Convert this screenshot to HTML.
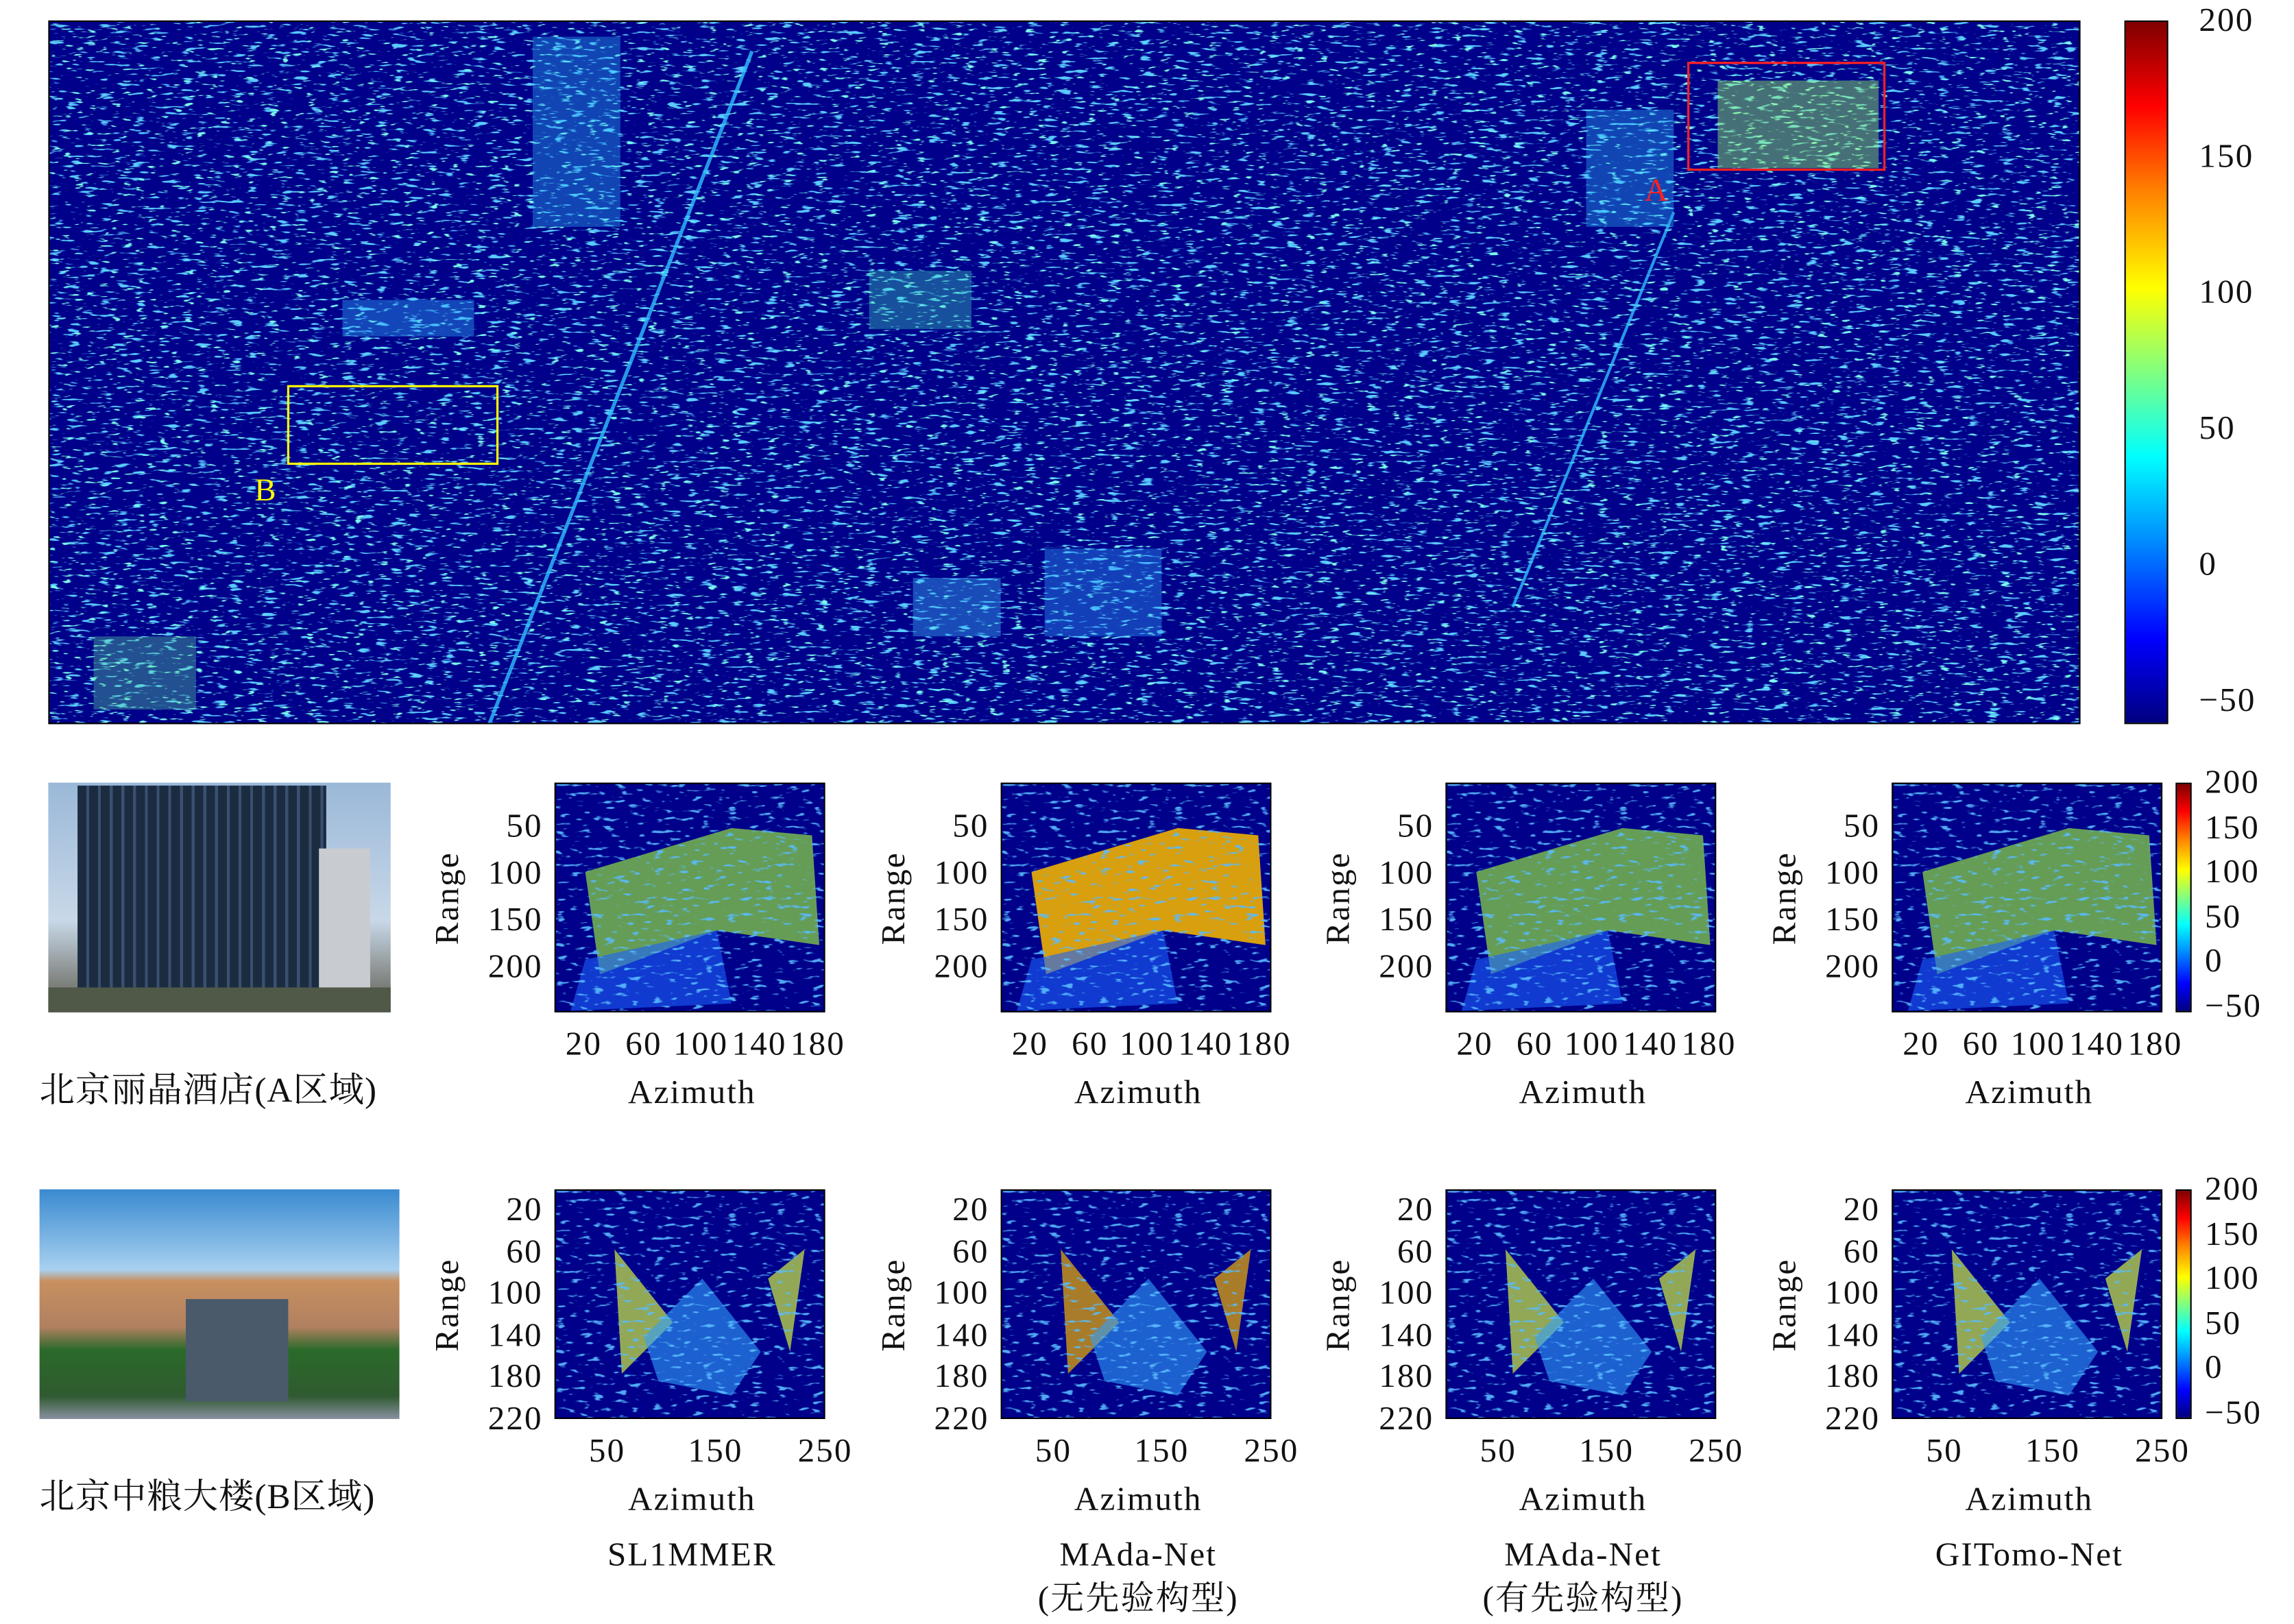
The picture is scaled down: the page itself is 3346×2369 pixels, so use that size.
<!DOCTYPE html>
<html><head><meta charset="utf-8"><style>
html,body{margin:0;padding:0;background:#fff;overflow:hidden}
body{width:3346px;height:2369px;position:relative}
#w{position:absolute;left:0;top:0;width:1568px;height:1110px;transform:scale(2.134);transform-origin:0 0;font-family:"Liberation Serif","Noto Serif CJK SC",serif;color:#111}
.a{position:absolute}
.t{position:absolute;font-size:23px;line-height:22px;white-space:nowrap;letter-spacing:1px}
.r{text-align:right}
.c{text-align:center}
.box{position:absolute;border:1.5px solid #000;box-sizing:border-box;overflow:hidden;background:#00008a}
.cb{background:linear-gradient(to top,#00007f 0%,#0000ff 12%,#00a0ff 28%,#00ffff 38%,#80ff80 50%,#ffff00 62%,#ff8000 76%,#ff0000 88%,#800000 100%);border:1.5px solid #000;box-sizing:border-box}
</style></head><body><div id="w">
<svg width="0" height="0" style="position:absolute">
<defs>
<filter id="n1" x="0" y="0" width="100%" height="100%"><feTurbulence type="fractalNoise" baseFrequency="0.09 0.45" numOctaves="2" seed="3"/><feColorMatrix type="matrix" values="0 0 0 0 0.1  0 0 0 0 0.6  0 0 0 0 1  10 0 0 0 -6.3"/></filter>
<filter id="n2" x="0" y="0" width="100%" height="100%"><feTurbulence type="fractalNoise" baseFrequency="0.12 0.5" numOctaves="2" seed="9"/><feColorMatrix type="matrix" values="0 0 0 0 0.2  0 0 0 0 0.95  0 0 0 0 0.85  10 0 0 0 -6.6"/></filter>
<filter id="n3" x="0" y="0" width="100%" height="100%"><feTurbulence type="fractalNoise" baseFrequency="0.12 0.35" numOctaves="2" seed="5"/><feColorMatrix type="matrix" values="0 0 0 0 0.1  0 0 0 0 0.5  0 0 0 0 1  8 0 0 0 -4.9"/></filter>
</defs></svg>

<div class="box" style="left:33px;top:14px;width:1389px;height:481px">
<svg width="1389" height="481" style="position:absolute;left:0;top:0">
<rect width="1389" height="481" filter="url(#n1)"/>
<rect width="1389" height="481" filter="url(#n2)"/>
<g opacity="0.8">
<rect x="330" y="10" width="60" height="130" fill="#30c0ff" opacity=".45"/>
<rect x="1140" y="40" width="110" height="60" fill="#a0ff60" opacity=".55"/>
<rect x="560" y="170" width="70" height="40" fill="#40e0c0" opacity=".45"/>
<rect x="680" y="360" width="80" height="60" fill="#30a0ff" opacity=".5"/>
<rect x="590" y="380" width="60" height="40" fill="#40c0ff" opacity=".5"/>
<rect x="30" y="420" width="70" height="50" fill="#60e0a0" opacity=".45"/>
<rect x="200" y="190" width="90" height="25" fill="#30b0ff" opacity=".5"/>
<rect x="1050" y="60" width="60" height="80" fill="#30c0ff" opacity=".45"/>
<line x1="300" y1="481" x2="480" y2="20" stroke="#30c0ff" stroke-width="2.5"/>
<line x1="1000" y1="400" x2="1110" y2="130" stroke="#30c0ff" stroke-width="2"/>
</g>
<rect x="163" y="249" width="143" height="53" fill="none" stroke="#ffff00" stroke-width="1.5"/>
<rect x="1120" y="28" width="134" height="73" fill="none" stroke="#ff2020" stroke-width="1.5"/>
<text x="140" y="327" fill="#ffff00" font-size="22" font-family="Liberation Serif">B</text>
<text x="1090" y="122" fill="#ff2020" font-size="22" font-family="Liberation Serif">A</text>
</svg></div>
<div class="a cb" style="left:1452px;top:14px;width:30px;height:481px"></div>
<div class="t" style="left:1503px;top:3px">200</div>
<div class="t" style="left:1503px;top:96px">150</div>
<div class="t" style="left:1503px;top:189px">100</div>
<div class="t" style="left:1503px;top:282px">50</div>
<div class="t" style="left:1503px;top:375px">0</div>
<div class="t" style="left:1503px;top:468px">−50</div>

<div class="a" style="left:33px;top:535px;width:234px;height:157px;background:linear-gradient(#9ab8d8,#c8d8e8 60%,#6a6a60 95%)">
<div class="a" style="left:20px;top:2px;width:170px;height:140px;background:repeating-linear-gradient(90deg,#1c2c40 0 6px,#3a5070 6px 8px)"></div>
<div class="a" style="left:185px;top:45px;width:35px;height:100px;background:#c8ccd0"></div>
<div class="a" style="left:0;top:140px;width:234px;height:17px;background:#505848"></div></div>
<div class="a" style="left:27px;top:813px;width:246px;height:157px;background:linear-gradient(#3a8ad0,#a8d0f0 35%,#c89060 40%,#b08060 60%,#2a6a2a 70%,#305a30 90%,#8890a0)">
<div class="a" style="left:100px;top:75px;width:70px;height:70px;background:#4a5a6a"></div></div>

<div class="t" style="left:27px;top:735px;font-size:24px;letter-spacing:0.5px">北京丽晶酒店(A区域)</div>
<div class="t" style="left:27px;top:1013px;font-size:24px;letter-spacing:0.5px">北京中粮大楼(B区域)</div>

<script>
var X=[379,684,988,1293];
var h='';
for(var r=0;r<2;r++){
 var tp=r?813:535;
 for(var i=0;i<4;i++){
  var x=X[i];
  var blob=r==0?(i==1?'#f0b000':'#90e040'):(i==1?'#f0b000':'#d0f040');
  h+='<div class="box" style="left:'+x+'px;top:'+tp+'px;width:185px;height:157px"><svg width="185" height="157" style="position:absolute">';
  if(r==0){h+='<path d="M20 60 L120 30 L175 35 L180 110 L110 100 L30 130Z" fill="'+blob+'" opacity="'+(i==1?0.9:0.7)+'"/><path d="M20 120 L110 100 L120 150 L10 155Z" fill="#1a60ff" opacity=".6"/>';}
  else{h+='<path d="M40 40 L80 90 L45 125 Z M145 60 L170 40 L160 110Z" fill="'+blob+'" opacity=".7"/><path d="M60 100 L100 60 L140 110 L120 140 L70 130Z" fill="#30a0ff" opacity=".6"/>';}
  h+='<rect width="185" height="157" filter="url(#n3)" opacity=".9"/>';
  h+='</svg></div>';
  var lbl=r==0?['50','100','150','200']:['20','60','100','140','180','220'];
  for(var k=0;k<lbl.length;k++){var y=r==0?554+k*32:816+k*28.5;h+='<div class="t r" style="left:'+(x-66)+'px;top:'+y+'px;width:58px">'+lbl[k]+'</div>';}
  h+='<div class="t c" style="left:'+(x-118)+'px;top:'+(tp+68)+'px;transform:rotate(-90deg);width:90px">Range</div>';
  if(r==0){var xs=['20','60','100','140','180'],xp=[20,61,100,140,180];for(var k=0;k<5;k++)h+='<div class="t c" style="left:'+(x+xp[k]-30)+'px;top:703px;width:60px">'+xs[k]+'</div>';}
  else{var xs=['50','150','250'],xp=[36,110,185];for(var k=0;k<3;k++)h+='<div class="t c" style="left:'+(x+xp[k]-30)+'px;top:981px;width:60px">'+xs[k]+'</div>';}
  h+='<div class="t c" style="left:'+(x-6)+'px;top:'+(tp+201)+'px;width:200px">Azimuth</div>';
 }
 h+='<div class="a cb" style="left:1487px;top:'+tp+'px;width:11px;height:157px"></div>';
 var cl=['200','150','100','50','0','−50'];
 for(var k=0;k<6;k++)h+='<div class="t" style="left:1507px;top:'+(tp-11+k*30.5)+'px">'+cl[k]+'</div>';
}
var nm=[['SL1MMER'],['MAda-Net','(无先验构型)'],['MAda-Net','(有先验构型)'],['GITomo-Net']];
for(var i=0;i<4;i++){for(var j=0;j<nm[i].length;j++)h+='<div class="t c" style="left:'+(X[i]-6)+'px;top:'+(1052+j*30)+'px;width:200px">'+nm[i][j]+'</div>';}
document.getElementById('w').insertAdjacentHTML('beforeend',h);
</script>
</div></body></html>
